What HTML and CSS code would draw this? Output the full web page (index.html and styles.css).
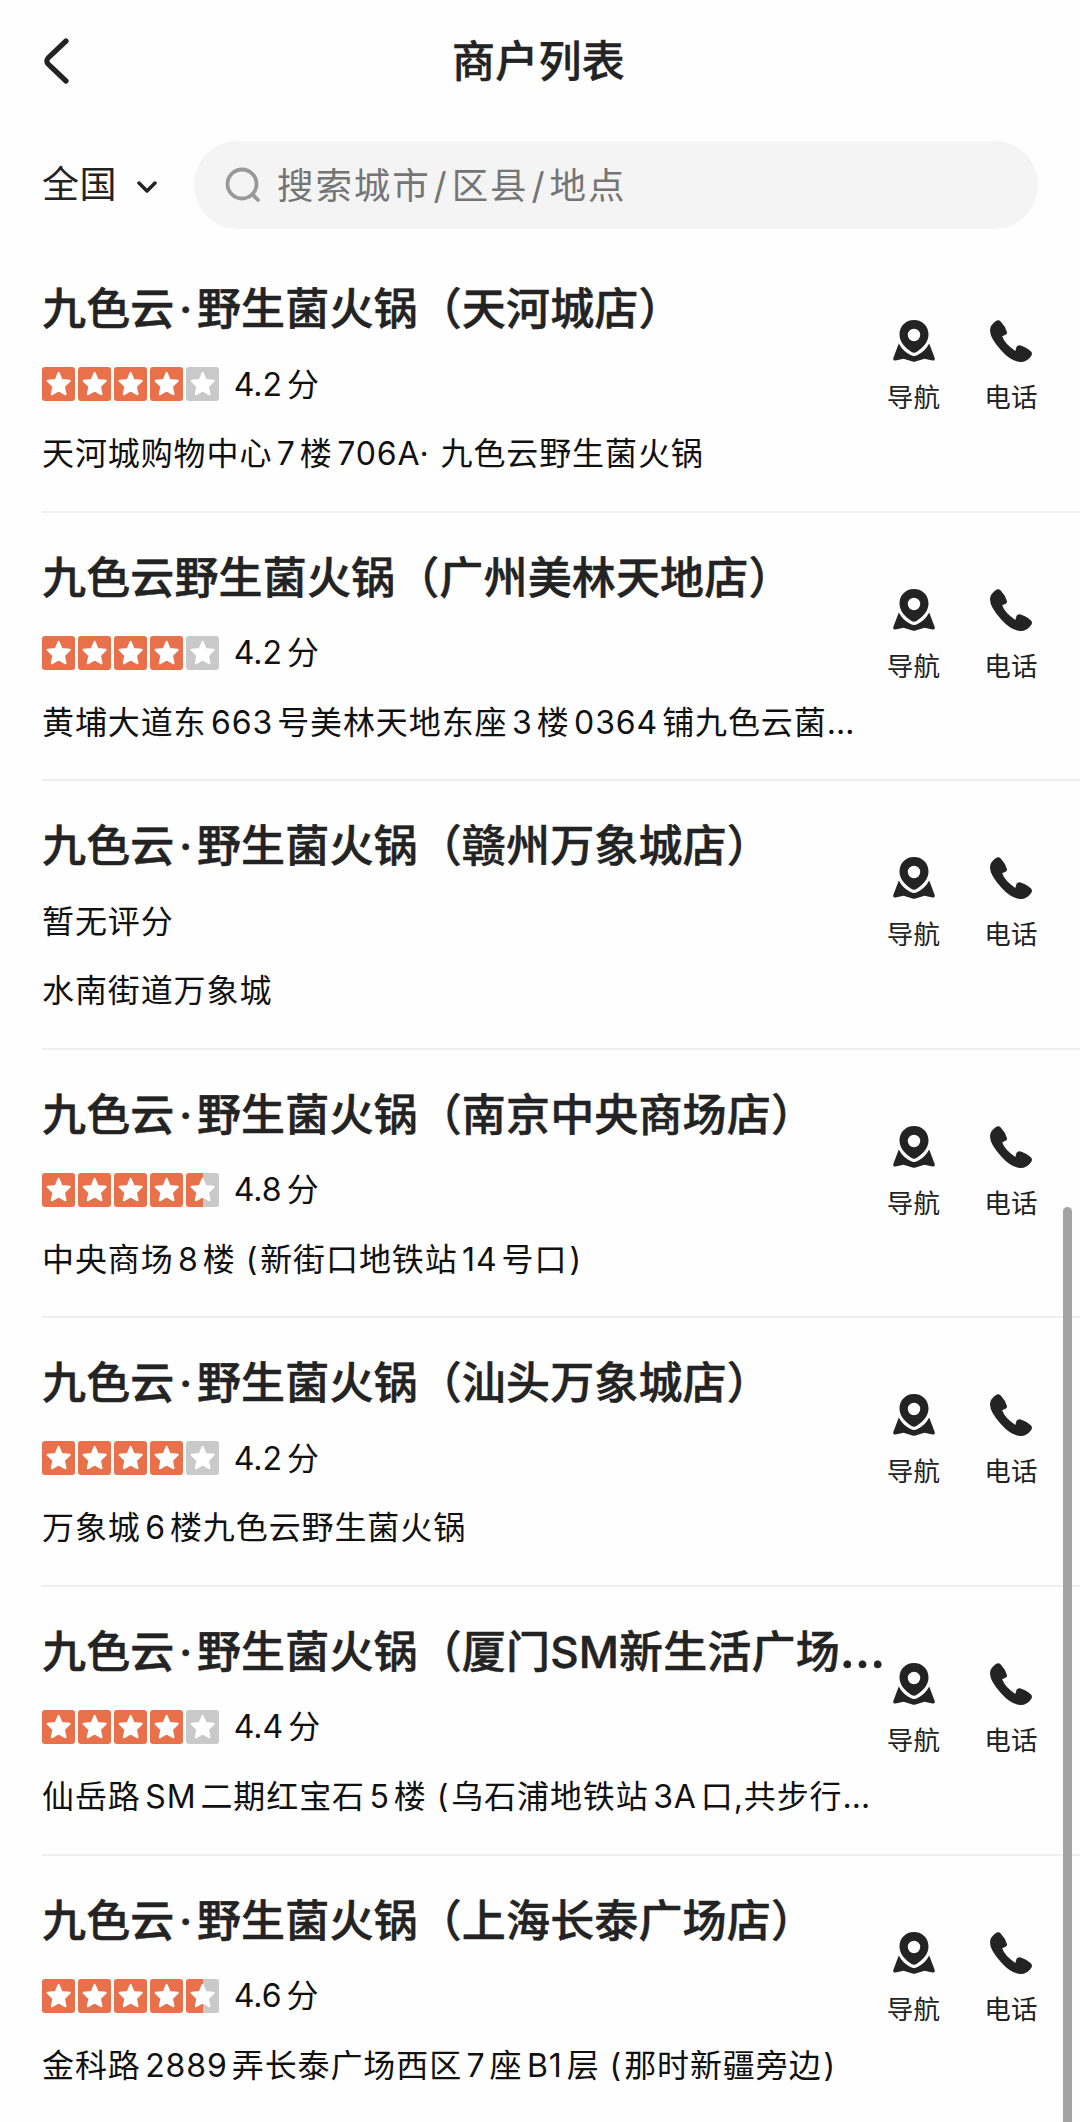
FILE: index.html
```
<!DOCTYPE html>
<html lang="zh-CN">
<head>
<meta charset="utf-8">
<title>商户列表</title>
<link rel="stylesheet" href="styles.css">
</head>
<body>
<svg class="defs" width="0" height="0" aria-hidden="true">
  <defs>
    <symbol id="nav" viewBox="0 0 42 42">
      <path fill-rule="evenodd" d="M21 0C12.500 0 6.500 6.300 6.500 14.500C6.500 22 12 27.500 18.500 32Q21 33.500 23.500 32C30 27.500 35.500 22 35.500 14.500C35.500 6.300 29.500 0 21 0ZM21 8.800A6.200 6.200 0 1 1 21 21.200A6.200 6.200 0 1 1 21 8.800Z"/>
      <path d="M5.800 23.500C8.500 29 13 32.500 17.500 35Q21 37 24.500 35C29 32.500 33.500 29 36.200 23.500L41.700 38Q42.300 40.800 39.500 40.500L31.500 38.800L22.500 41.600Q21 42 19.500 41.600L10.500 38.800L2.500 40.500Q-0.300 40.800 0.300 38Z"/>
    </symbol>
    <symbol id="tel" viewBox="0 0 42 42">
      <path d="M5.600 1.300Q8.400-1 10.700 1.500Q15.500 6.500 17 12.300Q17.200 14 15.500 14.800L12.200 16.300Q14.500 23.500 25.300 31L26.500 27Q27.400 25 29.800 25.200Q35.500 26.500 41 31.500Q42.600 33.300 41.500 35.400Q37.500 42 30.500 42Q21.500 42 11 30.300Q0 18 0 10.500Q0 5.300 5.600 1.300Z"/>
    </symbol>
    <symbol id="star" viewBox="0 0 33 33">
      <path d="M16.500 5.500L19.500 12.600L27.500 13.400L21.700 18.900L23.300 26.700L16.500 22.800L9.700 26.700L11.300 18.900L5.500 13.400L13.500 12.600Z" fill="#fff" stroke="#fff" stroke-width="2" stroke-linejoin="round"/>
    </symbol>
  </defs>
</svg>

<header class="topbar">
  <svg class="back" viewBox="0 0 26 46"><path d="M23 3L5.500 19.500Q2 23 5.500 26.500L23 43"/></svg>
  <h1 class="heading">商户列表</h1>
</header>

<div class="filter">
  <div class="region"><span class="place">全国</span><svg class="caret" viewBox="0 0 20 12"><path d="M2 2L10 10L18 2"/></svg></div>
  <div class="search">
    <svg class="lens" viewBox="0 0 36 36"><circle cx="17" cy="17" r="14.500"/><path d="M27.500 27.500L33 33"/></svg>
    <span class="hint">搜索城市<i>/</i>区县<i>/</i>地点</span>
  </div>
</div>

<main class="list" id="list"></main>
<div class="scrollbar"></div>
<script src="list.js"></script>
</body>
</html>
```
FILE: styles.css
```
* { box-sizing: border-box; }
body {
  margin: 0;
  height: 2122px;
  overflow: hidden;
  position: relative;
  background: #fefefe;
  color: #232323;
  font-family: Inter, "Noto Sans CJK SC", sans-serif;
}
.defs { position: absolute; }
.topbar {
  height: 122px;
  padding: 0 46px 0 43px;
  display: grid;
  grid-template-columns: 26px 1fr 26px;
  align-items: center;
}
.back { width: 26px; height: 46px; fill: none; stroke: #232323; stroke-width: 5.2; stroke-linecap: round; }
.heading { margin: 0; font-size: 43px; line-height: 60px; font-weight: 500; text-align: center; letter-spacing: 0.3px; -webkit-text-stroke: 0.4px #232323; }
.filter { display: flex; align-items: center; height: 122px; padding: 18px 42px 15px; }
.region { width: 152px; display: flex; align-items: center; font-size: 37px; }
.place { padding-bottom: 6px; letter-spacing: 0.5px; }
.caret { width: 20px; height: 12px; margin: 4px 0 0 20px; fill: none; stroke: #232323; stroke-width: 3.5; stroke-linecap: round; stroke-linejoin: round; }
.search { flex: 1; height: 88px; border-radius: 44px; background: #f4f4f4; display: flex; align-items: center; padding-left: 31px; }
.lens { width: 36px; height: 36px; fill: none; stroke: #999; stroke-width: 3.8; stroke-linecap: round; }
.hint { margin-left: 16px; padding-bottom: 3px; font-size: 36.500px; letter-spacing: 1.900px; color: #757575; }
.hint i { font-style: normal; margin: 0 3px; }

.row { height: 268.600px; margin-left: 42px; padding-right: 42px; border-bottom: 2px solid #efefef; display: flex; }
.info { width: 844.500px; padding-top: 33px; white-space: nowrap; }
.name { margin: 0; font-size: 44px; line-height: 64px; font-weight: 500; letter-spacing: 0.150px; -webkit-text-stroke: 0.5px #232323; }
.dot { display: inline-block; width: 22.500px; text-align: center; letter-spacing: 0; }
.more { font-size: 50px; line-height: 0; }
.rating { height: 34px; margin-top: 26px; display: flex; align-items: center; font-size: 32px; color: #111; }
.stars { display: flex; gap: 2.700px; margin-right: 14.500px; }
.star { width: 33.300px; height: 34px; border-radius: 3px; background: #c9c9c9; display: block; }
.star.full { background: #e8704a; }
.star.half { background: linear-gradient(90deg, #e8704a 50%, #c9c9c9 50%); }
.score { line-height: 34px; padding-top: 1px; }
.unit { margin-left: 5px; }
.addr { margin-top: 29px; font-size: 32px; line-height: 48px; letter-spacing: 0.900px; color: #111; }
.num { margin: 0 4px 0 4.500px; letter-spacing: 0.900px; }
.num.tight { margin-right: 1px; }
.open { margin: 0 2px 0 0; }
.close { margin-left: 2px; }
.none { letter-spacing: 0.900px; padding-bottom: 4px; }
.actions { flex: 1; display: flex; justify-content: space-between; padding-top: 76px; }
.action { width: 54px; display: flex; flex-direction: column; align-items: center; font-size: 26.500px; line-height: 36px; letter-spacing: 0.300px; white-space: nowrap; }
.icon { width: 42px; height: 42px; margin-bottom: 17px; fill: #232323; }
.scrollbar { position: absolute; left: 1063px; top: 1207px; width: 9px; height: 930px; border-radius: 5px; background: #a3a3a3; }
```
FILE: list.js
```
const shops = [
  ["九色云·野生菌火锅（天河城店）", "4.2", 4, "天河城购物中心|7|楼|706A·| 九色云野生菌火锅"],
  ["九色云野生菌火锅（广州美林天地店）", "4.2", 4, "黄埔大道东|663|号美林天地东座|3|楼|0364|铺九色云菌…"],
  ["九色云·野生菌火锅（赣州万象城店）", null, 0, "水南街道万象城"],
  ["九色云·野生菌火锅（南京中央商场店）", "4.8", 4.5, "中央商场|8|楼 (新街口地铁站|14|号口)"],
  ["九色云·野生菌火锅（汕头万象城店）", "4.2", 4, "万象城|6|楼九色云野生菌火锅"],
  ["九色云·野生菌火锅（厦门SM新生活广场…", "4.4", 4, "仙岳路|SM|二期红宝石|5|楼 (乌石浦地铁站|3A|口,共步行…"],
  ["九色云·野生菌火锅（上海长泰广场店）", "4.6", 4.5, "金科路|2889|弄长泰广场西区|7|座|B1|层 (那时新疆旁边)"]
];
const star = (n, i) => {
  const kind = n >= i + 1 ? "full" : n > i ? "half" : "";
  return `<svg class="star ${kind}"><use href="#star"/></svg>`;
};
const rating = (score, n) => score
  ? `<div class="stars">${[0, 1, 2, 3, 4].map(i => star(n, i)).join("")}</div><span class="score">${score}<span class="unit">分</span></span>`
  : `<span class="none">暂无评分</span>`;
const title = name => name
  .replace("·", '<span class="dot">·</span>')
  .replace("…", '<span class="more">…</span>');
const address = addr => addr.split("|")
  .map((t, i) => i % 2 ? `<span class="num${t.endsWith("·") ? " tight" : ""}">${t}</span>` : t).join("")
  .replace("(", '<span class="open">(</span>')
  .replace(")", '<span class="close">)</span>');
document.getElementById("list").innerHTML = shops.map(([name, score, n, addr]) => `
  <article class="row">
    <div class="info">
      <h2 class="name">${title(name)}</h2>
      <div class="rating">${rating(score, n)}</div>
      <div class="addr">${address(addr)}</div>
    </div>
    <div class="actions">
      <div class="action"><svg class="icon"><use href="#nav"/></svg>导航</div>
      <div class="action"><svg class="icon"><use href="#tel"/></svg>电话</div>
    </div>
  </article>`).join("");
```
